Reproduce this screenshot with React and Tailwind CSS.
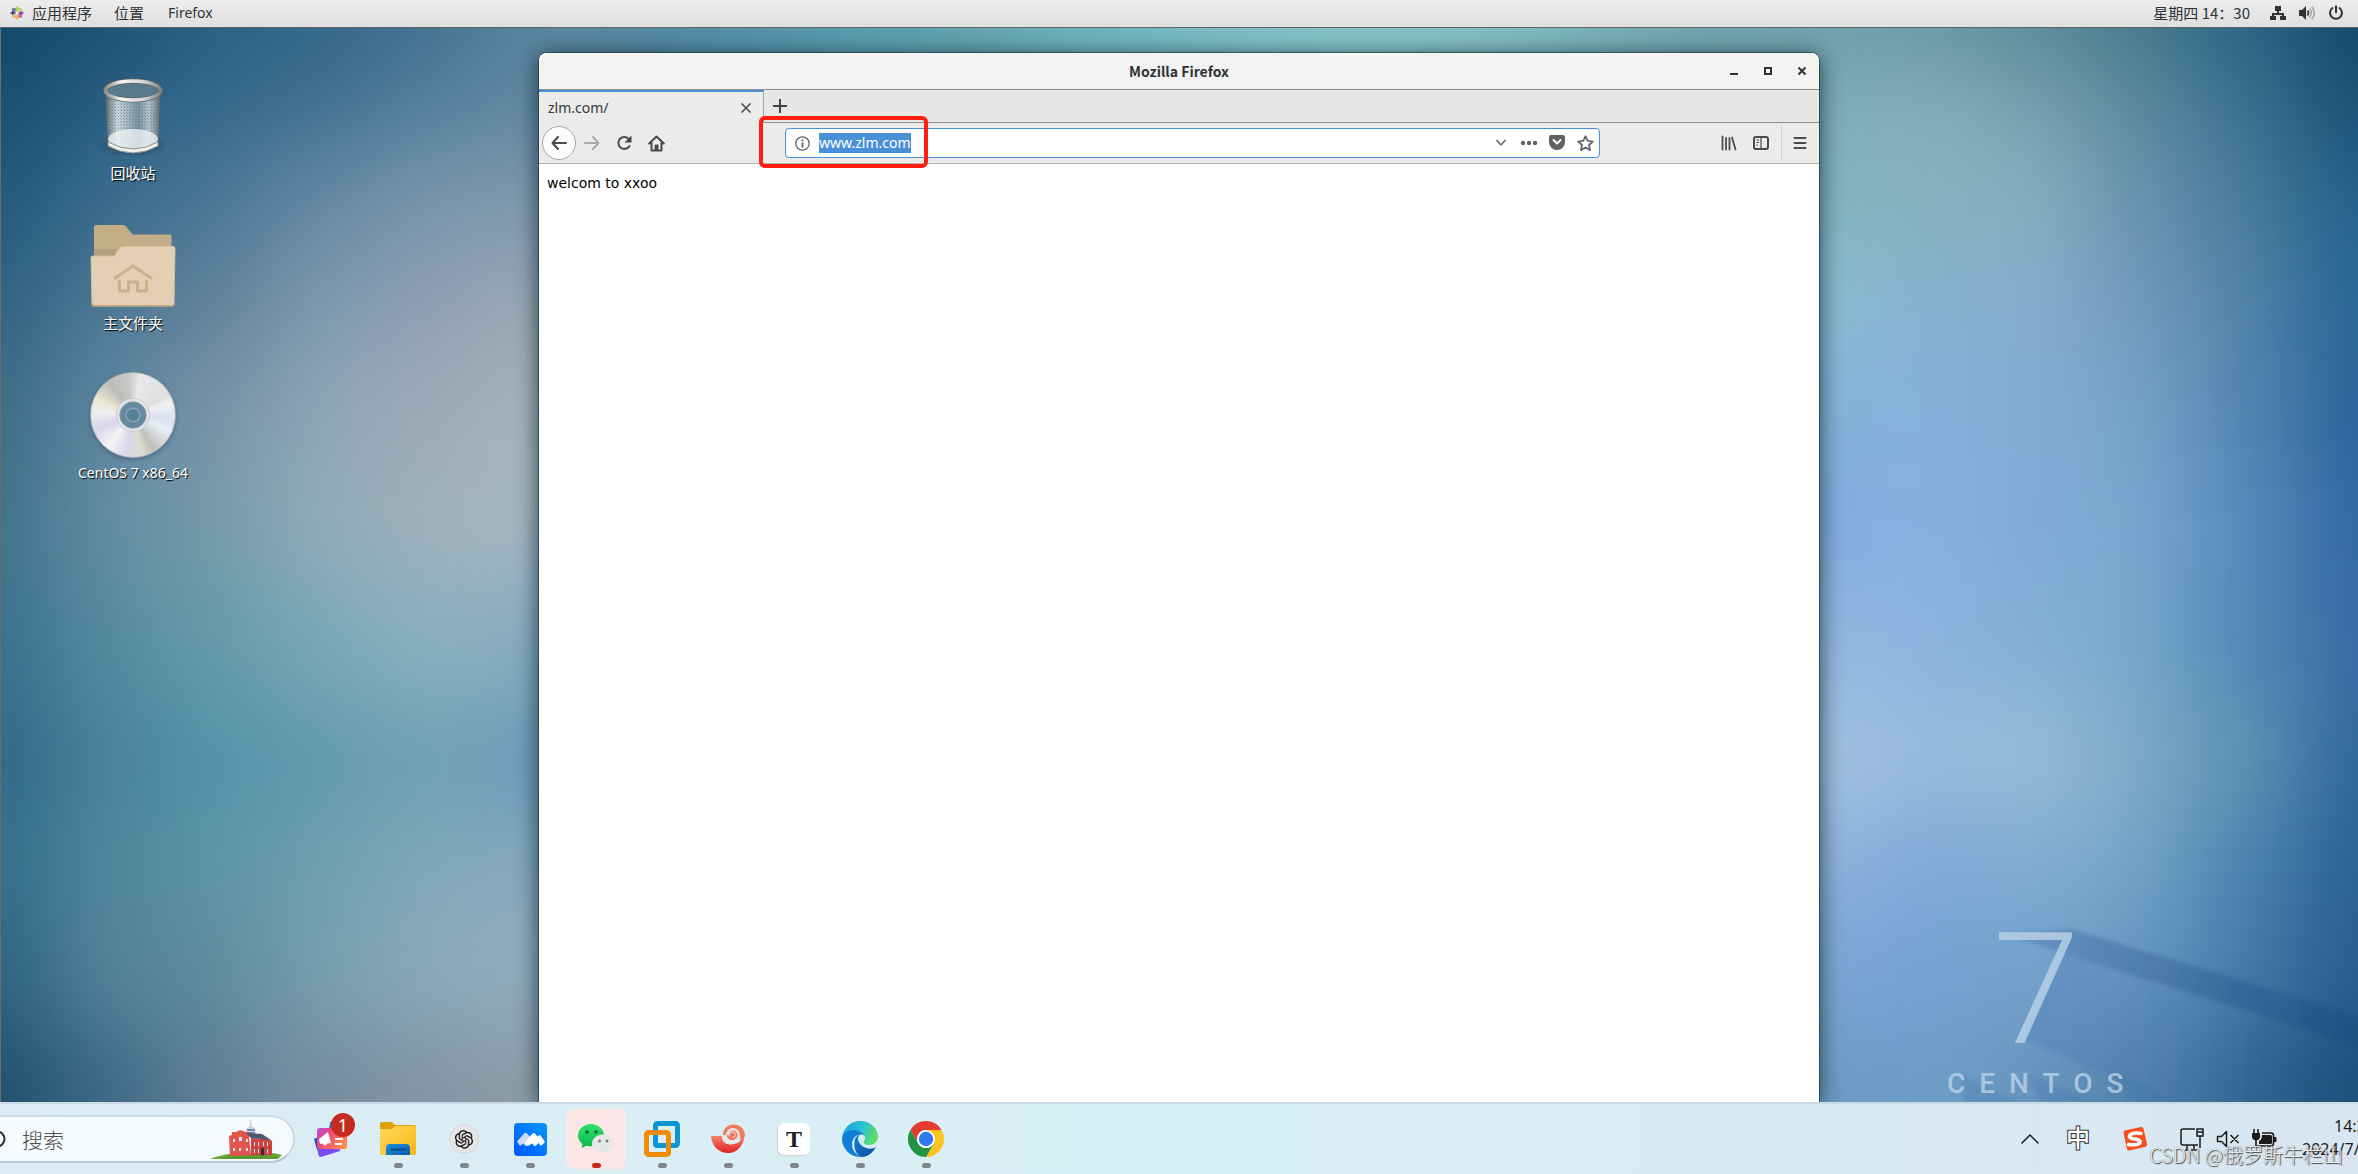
import { AiOutlineOpenAI } from 'react-icons/ai';

// Wallpaper colour samples: the centre columns only show above the window
const LEFT_X = [0, 107, 214, 320, 430, 540];
const RIGHT_X = [1819, 1927, 2034, 2140, 2247, 2358];
const ROW_Y = [28, 100, 200, 300, 400, 520, 650, 760, 860, 960, 1100];

const LEFT_COLORS = [
  '114767 1b5176 2a6082 336789 43718f 5a849e',
  '184e70 2a5e81 366a8c 42708f 557f9c 6489a2',
  '22597b 3b6c8e 4b7695 6688a3 7a97ae 8099ac',
  '316381 4c7895 618199 7d9ab0 8f9eb1 9ba9b4',
  '3d6b85 5e85a0 7893a8 8fa5b3 9daab7 a8b4bc',
  '40728b 658da3 779ba9 90acb7 a0b2bc a5b7c1',
  '38718c 558a9f 659bab 7aa7b7 8ab0be 88abbf',
  '306785 4a8198 5393a8 629aae 70a0b5 6c9abb',
  '33708b 50879b 5d95a8 6fa0b1 81a8ba 88a9bf',
  '2e647f 55839a 608b9e 78a0af 8aa9b8 92adbb',
  '1f4f6c 3e6985 617f97 788d9f 8395a2 8f9da8',
];

const RIGHT_COLORS = [
  '6fa0a9 6a98a2 5a8a98 45798c 2a6382 14476a',
  '80adb6 87adb9 7ca0b0 5c899e 3c7090 1c4f74',
  '84b6c0 88b1bd 87adbf 6a92ae 487a9a 23608a',
  '8dbdd4 87b2cf 87accc 7399bb 5282a8 296695',
  '86b3db 87b2db 83abd2 76a2c8 5283ae 2b629a',
  '84abe3 8ab2df 80aad6 7aa7ce 5688bb 3367a2',
  '97b7e2 8db3de 85b0d6 76a7cb 5388b5 386aa3',
  'a5c5e4 98b9da 9abdd6 7fa9c6 5e93b3 31669c',
  '94b3e0 82a9d8 82acd1 74a4c8 4c82ae 2b6095',
  '7ea6d8 75a1d2 74a3cc 6797c0 4579a8 285b8f',
  '6c99c6 6e9ec7 6894be 5080aa 33638f 1c4d78',
];

const CENTER_X = [650, 760, 870, 980, 1090, 1200, 1310, 1420, 1530, 1640, 1740];
const CENTER_COLORS = '5488a2 5492a9 5b9dae 63a4af 6fb2bd 78bac2 84c2c5 86c2c3 7fb9bd 74abb1 6fa2aa'.split(' ');

function edges(points, i, before, after) {
  const start = i === 0 ? before : (points[i - 1] + points[i]) / 2;
  const end = i === points.length - 1 ? after : (points[i] + points[i + 1]) / 2;
  return [start, end];
}

function SampleGrid({ xs, rows, from, to }) {
  return rows.map((row, r) => {
    const [top, bottom] = edges(ROW_Y, r, -150, 1300);
    return row.split(' ').map((color, c) => {
      const [left, right] = edges(xs, c, from, to);
      return (
        <rect key={`${r}-${c}`} x={left} y={top} width={right - left + 1} height={bottom - top + 1} fill={`#${color}`} />
      );
    });
  });
}

function Wallpaper() {
  return (
    <svg className="absolute inset-0 w-full h-full" viewBox="0 28 2358 1074" preserveAspectRatio="none" aria-hidden="true">
      <defs>
        <filter id="soften" filterUnits="userSpaceOnUse" x="-200" y="-150" width="2760" height="1450" colorInterpolationFilters="sRGB">
          <feGaussianBlur stdDeviation="44" />
        </filter>
      </defs>
      <g filter="url(#soften)">
        {CENTER_X.map((x, i) => (
          <rect key={x} x={x - 60} y="-150" width="130" height="1450" fill={`#${CENTER_COLORS[i]}`} />
        ))}
        <SampleGrid xs={LEFT_X} rows={LEFT_COLORS} from={-200} to={595} />
        <SampleGrid xs={RIGHT_X} rows={RIGHT_COLORS} from={1780} to={2560} />
      </g>
    </svg>
  );
}

function LogoShadow() {
  return (
    <svg className="absolute right-0 bottom-0" width="420" height="180" viewBox="1938 922 420 180" aria-hidden="true">
      <defs>
        <linearGradient id="beam" x1="0" y1="0" x2="1" y2="0">
          <stop offset="0" stopColor="#3a669e" stopOpacity="0.25" />
          <stop offset="0.3" stopColor="#3a669e" stopOpacity="0.45" />
          <stop offset="1" stopColor="#14497c" stopOpacity="0.45" />
        </linearGradient>
        <linearGradient id="beamSoft" x1="0" y1="0" x2="1" y2="0">
          <stop offset="0" stopColor="#4a78b4" stopOpacity="0.4" />
          <stop offset="0.7" stopColor="#4a78b4" stopOpacity="0" />
        </linearGradient>
        <filter id="beamBlur"><feGaussianBlur stdDeviation="2" /></filter>
      </defs>
      <g filter="url(#beamBlur)">
        <path d="M2003 934 L2071 929 L2370 1019 L2370 1050 Z" fill="url(#beam)" />
        <path d="M2062 952 L2370 1048 L2370 1110 L2190 1110 L2024 1040 Z" fill="url(#beamSoft)" />
        <path d="M1962 1076 L2020 1102 L1965 1102 Z M2030 1076 L2095 1102 L2040 1102 Z M2120 1074 L2180 1102 L2130 1102 Z" fill="#3f6fa8" fillOpacity="0.3" />
      </g>
    </svg>
  );
}

function CentosMark() {
  const petals = ['#9ccd2a', '#932279', '#efa724', '#262577'];
  return (
    <svg width="14" height="14" viewBox="0 0 14 14" aria-hidden="true">
      {petals.map((color, i) => (
        <g key={color} transform={`rotate(${i * 90} 7 7)`}>
          <path d="M7 0 L9 2.4 L7 6.5 L5 2.4 Z" fill={color} fillOpacity="0.8" />
          <rect x="8.2" y="2" width="3.6" height="3.6" fill={color} fillOpacity="0.6" />
        </g>
      ))}
      <circle cx="7" cy="7" r="1" fill="#fff" />
    </svg>
  );
}

function TopBar() {
  return (
    <header className="flex items-center h-7 pl-[10px] pr-[14px] pb-[2px] bg-linear-to-b from-[#ededed] to-[#dfdfdf] border-b border-[#5f6568] text-[15px] leading-5 text-[#2e3436]">
      <nav className="flex items-center">
        <CentosMark />
        <button className="ml-2">应用程序</button>
        <button className="ml-[22px]">位置</button>
        <button className="ml-6 text-sm leading-5 font-['Noto_Sans',sans-serif]">Firefox</button>
      </nav>
      <div className="flex items-center ml-auto">
        <button className="mr-5">星期四 14：30</button>
        <button className="flex items-center gap-[13px]" aria-label="系统菜单">
          <svg width="16" height="16" viewBox="0 0 16 16" fill="#2e3436">
            <path d="M5 1h6v5H9v2h5v3h2v4h-6v-4h2V10H4v1h2v4H0v-4h2V8h5V6H5z" />
          </svg>
          <svg width="16" height="16" viewBox="0 0 16 16" fill="none">
            <path d="M0 5h3l4-4v14l-4-4H0z" fill="#2e3436" />
            <path d="M8.5 5.5q2 2.5 0 5" stroke="#2e3436" strokeWidth="1.6" />
            <path d="M10.5 3.5q3.6 4.5 0 9M12.7 1.5q5 6.5 0 13" stroke="#a9abab" strokeWidth="1.6" />
          </svg>
          <svg width="16" height="16" viewBox="0 0 16 16" fill="none" stroke="#2e3436" strokeWidth="2" strokeLinecap="round">
            <path d="M8 1.2v6M4.5 3a6 6 0 1 0 7 0" />
          </svg>
        </button>
      </div>
    </header>
  );
}

function TrashIcon() {
  return (
    <svg width="72" height="88" viewBox="0 0 72 88" aria-hidden="true">
      <defs>
        <linearGradient id="bin" x1="0" y1="0" x2="1" y2="0">
          <stop offset="0" stopColor="#4b565b" />
          <stop offset="0.07" stopColor="#7d8c93" stopOpacity="0.9" />
          <stop offset="0.22" stopColor="#dfe6e8" stopOpacity="0.9" />
          <stop offset="0.36" stopColor="#c4d1d6" stopOpacity="0.85" />
          <stop offset="0.6" stopColor="#8aa0ab" stopOpacity="0.8" />
          <stop offset="0.78" stopColor="#cdd7da" stopOpacity="0.85" />
          <stop offset="0.93" stopColor="#7d8c93" stopOpacity="0.9" />
          <stop offset="1" stopColor="#4b565b" />
        </linearGradient>
        <linearGradient id="rim" x1="0" y1="0" x2="1" y2="0">
          <stop offset="0" stopColor="#8b8f8d" />
          <stop offset="0.3" stopColor="#f6f6f5" />
          <stop offset="0.7" stopColor="#d6d7d5" />
          <stop offset="1" stopColor="#7d8180" />
        </linearGradient>
        <pattern id="mesh" width="3" height="3" patternUnits="userSpaceOnUse">
          <rect width="1" height="1" fill="#52666f" fillOpacity="0.5" />
          <rect x="2" y="2" width="1" height="1" fill="#52666f" fillOpacity="0.4" />
        </pattern>
        <radialGradient id="binFloor">
          <stop offset="0" stopColor="#102a3a" stopOpacity="0.7" />
          <stop offset="1" stopColor="#102a3a" stopOpacity="0" />
        </radialGradient>
      </defs>
      <ellipse cx="36" cy="74" rx="36" ry="12" fill="url(#binFloor)" />
      <path d="M8 20 L11 74 Q36 88 61 74 L64 20 Z" fill="url(#bin)" />
      <path d="M8 20 L11 74 Q36 88 61 74 L64 20 Z" fill="url(#mesh)" />
      <ellipse cx="36" cy="68" rx="25" ry="10" fill="#f4f6f5" fillOpacity="0.75" />
      <path d="M11 71 Q36 85 61 71 V75 Q36 89 11 75 Z" fill="#f0f1ef" stroke="#8d9190" strokeWidth="1" />
      <ellipse cx="36" cy="19" rx="28" ry="9" fill="#587b8e" />
      <ellipse cx="36" cy="19" rx="28" ry="9" fill="url(#mesh)" />
      <ellipse cx="36" cy="19.500" rx="27.500" ry="9.500" fill="none" stroke="#5f6664" strokeWidth="5" />
      <ellipse cx="36" cy="19.500" rx="27.500" ry="9.500" fill="none" stroke="url(#rim)" strokeWidth="3.500" />
    </svg>
  );
}

function HomeFolderIcon() {
  return (
    <svg width="88" height="88" viewBox="0 0 88 88" aria-hidden="true">
      <path d="M5 6q0-2 2-2h27q2 0 3.5 2l6 7.5h37q2 0 2 2V40H5z" fill="#c3ae88" />
      <path d="M5 28h22v8H5z" fill="#a8956f" fillOpacity="0.6" />
      <path d="M2 37q0-2 2-2h21.5l5-7.5q1-2 3-2H84q2 0 2 2L85 83q0 2-2 2H5q-2 0-2-2z" fill="#e3d0b4" stroke="#d5c09e" strokeWidth="1" />
      <path d="M3 83q0 2 2 2h78q2 0 2-2" fill="none" stroke="#b89f79" strokeWidth="1.5" />
      <path d="M26 57 L44 45 L62 57" fill="none" stroke="#c8b08b" strokeWidth="3" strokeLinecap="round" strokeLinejoin="round" />
      <path d="M30.5 60v10h9v-9h9v9h9V60" fill="none" stroke="#c8b08b" strokeWidth="3" strokeLinecap="round" strokeLinejoin="round" />
    </svg>
  );
}

function DiscIcon() {
  return (
    <div className="relative w-[86px] h-[86px] rounded-full border border-[#a9adb0] shadow-[0_2px_4px_rgba(20,50,70,0.35)] bg-[conic-gradient(from_10deg,#e9e9ea,#dfdfe2_14%,#f1f1f0_17%,#dbe0ee_24%,#e9edf6_29%,#bfc0bb_39%,#dcdccf_43%,#d9d9ea_50%,#f3f3f6_58%,#d9d7ec_66%,#f0efee_74%,#e7e6cf_79%,#bdbcb8_87%,#c9c8c6_95%,#e9e9ea)]">
      <svg className="absolute inset-0" width="84" height="84" viewBox="0 0 86 86" aria-hidden="true">
        <circle cx="43" cy="43" r="17" fill="#e4e5e9" stroke="#c7c9cd" strokeWidth="1" />
        <circle cx="43" cy="43" r="13.5" fill="#67899d" stroke="#8199a7" strokeWidth="1" />
        <circle cx="43" cy="43" r="7" fill="#54809a" stroke="#87a3b3" strokeWidth="1.5" />
      </svg>
    </div>
  );
}

function DesktopIcon({ icon, label, latin }) {
  return (
    <button className="flex flex-col items-center gap-1 text-white [text-shadow:1px_1px_1px_#000]">
      <span className="flex items-center justify-center h-[88px]">{icon}</span>
      {latin ? (
        <span className="text-sm leading-5 font-['Noto_Sans',sans-serif] whitespace-nowrap">{label}</span>
      ) : (
        <span className="text-[15px] leading-5 whitespace-nowrap">{label}</span>
      )}
    </button>
  );
}

function ToolButton({ label, children }) {
  return (
    <button aria-label={label} className="flex items-center justify-center w-8 h-8 shrink-0">
      {children}
    </button>
  );
}

function TitleBar() {
  return (
    <div className="grid grid-cols-[1fr_auto_1fr] items-center h-[37px] bg-[#f3f3f3] border-b border-[#8e8e8d] rounded-t-lg shadow-[inset_0_1px_0_#ffffff]">
      <span></span>
      <h1 className="text-sm leading-5 font-bold text-[#2e3436]">Mozilla Firefox</h1>
      <div className="flex justify-end">
        <button aria-label="最小化" className="flex items-center justify-center w-[34px] h-8">
          <svg width="10" height="10" viewBox="0 0 10 10"><path d="M1 7h8v2H1z" fill="#2e3436" /></svg>
        </button>
        <button aria-label="最大化" className="flex items-center justify-center w-[34px] h-8">
          <svg width="10" height="10" viewBox="0 0 10 10"><path d="M2 2h6v6H2z" fill="none" stroke="#2e3436" strokeWidth="2" /></svg>
        </button>
        <button aria-label="关闭" className="flex items-center justify-center w-[34px] h-8">
          <svg width="10" height="10" viewBox="0 0 10 10"><path d="M1.5 1.5l7 7M8.5 1.5l-7 7" stroke="#2e3436" strokeWidth="2" /></svg>
        </button>
      </div>
    </div>
  );
}

function TabStrip() {
  return (
    <div className="flex h-[33px] bg-[#e7e7e5] font-['Noto_Sans',sans-serif]">
      <div className="flex items-center justify-between w-[225px] pl-[9px] pr-[10px] border-r border-r-[#a5a5a4] border-t-2 border-t-[#4a90d9] bg-[#ebebea] text-sm leading-5 text-[#33393b]">
        <button>zlm.com/</button>
        <button aria-label="关闭标签页">
          <svg width="14" height="14" viewBox="0 0 14 14" fill="none" stroke="#4a4f52" strokeWidth="1.6">
            <path d="M2.5 2.5l9 9M11.5 2.5l-9 9" />
          </svg>
        </button>
      </div>
      <div className="flex items-center flex-1 pl-[9px] border-b border-[#8e8e8d]">
        <button aria-label="新标签页">
          <svg width="14" height="14" viewBox="0 0 14 14" fill="none" stroke="#3e4447" strokeWidth="2">
            <path d="M7 0v14M0 7h14" />
          </svg>
        </button>
      </div>
    </div>
  );
}

function AddressBar() {
  return (
    <div className="relative flex items-center flex-1 h-[30px] mx-[113px] border border-[#4a90d9] rounded bg-white">
      <button aria-label="网站信息" className="flex items-center justify-center w-[33px] shrink-0">
        <svg width="15" height="15" viewBox="0 0 15 15" fill="none" stroke="#5f6264">
          <circle cx="7.5" cy="7.5" r="6.7" strokeWidth="1.3" />
          <path d="M7.5 6.5v5M7.5 3.5v1.8" strokeWidth="1.8" />
        </svg>
      </button>
      <input
        aria-label="网址"
        defaultValue="www.zlm.com"
        className="field-sizing-content h-5 bg-[#4a90d9] text-white text-sm leading-5 font-['Noto_Sans',sans-serif] outline-none"
      />
      <div className="flex items-center ml-auto">
        <button aria-label="历史记录" className="flex justify-center w-7">
          <svg width="12" height="8" viewBox="0 0 12 8" fill="none" stroke="#5f6264" strokeWidth="1.5"><path d="M1.5 1l4.5 5 4.500-5" /></svg>
        </button>
        <button aria-label="页面操作" className="flex justify-center w-7">
          <svg width="18" height="6" viewBox="0 0 18 6" fill="#5f6264"><circle cx="3" cy="3" r="2.2" /><circle cx="9" cy="3" r="2.2" /><circle cx="15" cy="3" r="2.2" /></svg>
        </button>
        <button aria-label="保存到 Pocket" className="flex justify-center w-7">
          <svg width="18" height="16" viewBox="0 0 18 16">
            <path d="M3 0h12q2 0 2 2v5a8 8 0 0 1-16 0V2q0-2 2-2z" fill="#5f6264" />
            <path d="M5.5 5l3.5 3.5L12.5 5" fill="none" stroke="#fff" strokeWidth="2" strokeLinecap="round" strokeLinejoin="round" />
          </svg>
        </button>
        <button aria-label="添加书签" className="flex justify-center w-7">
          <svg width="17" height="17" viewBox="0 0 17 17" fill="none" stroke="#5f6264" strokeWidth="1.7" strokeLinejoin="round">
            <path d="M8.5 1.2l2.2 4.7 5.2.6-3.9 3.5 1.1 5.2-4.6-2.6-4.6 2.6L5 10 1.1 6.5l5.2-.6z" />
          </svg>
        </button>
      </div>
      {/* highlight around the address */}
      <div className="absolute -left-[27px] -top-[13px] w-[169px] h-[52px] border-4 border-[#ff1f12] rounded-md pointer-events-none"></div>
    </div>
  );
}

function NavBar() {
  return (
    <div className="flex items-center h-[41px] px-[3px] bg-[#ebebea] border-b border-[#b4b4b3]">
      <button aria-label="后退" className="flex items-center justify-center w-[34px] h-[34px] shrink-0 rounded-full border border-[#a9a9a8] bg-[#fbfbfb]">
        <svg width="16" height="14" viewBox="0 0 16 14" fill="none" stroke="#464c4e" strokeWidth="2" strokeLinecap="round" strokeLinejoin="round">
          <path d="M15 7H1.5M7 1L1.5 7 7 13" />
        </svg>
      </button>
      <ToolButton label="前进">
        <svg width="16" height="14" viewBox="0 0 16 14" fill="none" stroke="#a8abac" strokeWidth="2" strokeLinecap="round" strokeLinejoin="round">
          <path d="M1 7h13.5M9 1l5.5 6L9 13" />
        </svg>
      </ToolButton>
      <ToolButton label="刷新">
        <svg width="16" height="16" viewBox="0 0 16 16" fill="none">
          <path d="M13 4.2A6 6 0 1 0 13.5 11" stroke="#464c4e" strokeWidth="2" strokeLinecap="round" />
          <path d="M15.5 0.5v7h-7z" fill="#464c4e" />
        </svg>
      </ToolButton>
      <ToolButton label="主页">
        <svg width="17" height="17" viewBox="0 0 17 17" fill="none" stroke="#464c4e" strokeWidth="2" strokeLinejoin="round" strokeLinecap="round">
          <path d="M1.2 8.5L8.5 1.5l7.3 7M3.5 8v7.500h10V8" />
          <path d="M7 15v-5h3v5z" fill="#464c4e" strokeWidth="1" />
        </svg>
      </ToolButton>
      <AddressBar />
      <ToolButton label="我的足迹">
        <svg width="16" height="16" viewBox="0 0 16 16" fill="none" stroke="#464c4e" strokeLinecap="round">
          <path d="M1.5 1.5v13M5 3v11.5M8.500 3v11.5M11 2.5l3.5 12" strokeWidth="1.8" />
        </svg>
      </ToolButton>
      <ToolButton label="侧栏">
        <svg width="16" height="16" viewBox="0 0 16 16" fill="none" stroke="#464c4e">
          <rect x="1" y="2" width="14" height="12" rx="2" strokeWidth="2" />
          <path d="M8 2v12M3.5 5h2.5M3.5 7.5h2.5M3.5 10H5" strokeWidth="1.2" />
        </svg>
      </ToolButton>
      <div className="w-px h-[34px] ml-1 mr-[2px] bg-[#cfcfce]"></div>
      <ToolButton label="打开菜单">
        <svg width="14" height="14" viewBox="0 0 14 14" fill="none" stroke="#464c4e" strokeWidth="2" strokeLinecap="round">
          <path d="M1.5 2h11M1.5 7h11M1.5 12h11" />
        </svg>
      </ToolButton>
    </div>
  );
}

function BrowserWindow() {
  return (
    <section className="flex flex-col mt-[25px] rounded-t-lg bg-white shadow-[0_0_0_1px_rgba(30,60,70,0.7),0_3px_22px_rgba(0,20,30,0.75)]">
      <TitleBar />
      <TabStrip />
      <NavBar />
      <main className="flex-1 px-2 pt-[9px] text-sm leading-5 text-black font-['DejaVu_Sans',sans-serif]">welcom to xxoo</main>
    </section>
  );
}

function Desktop() {
  return (
    <div className="relative flex-1 grid grid-cols-[1fr_minmax(0,1280px)_1fr] overflow-hidden">
      <Wallpaper />
      <LogoShadow />
      <div className="relative border-l border-[#6c6c6c]">
        <div className="flex flex-col items-center gap-[38px] w-[264px] pt-[43px]">
          <DesktopIcon icon={<TrashIcon />} label="回收站" />
          <DesktopIcon icon={<HomeFolderIcon />} label="主文件夹" />
          <DesktopIcon icon={<DiscIcon />} label="CentOS 7 x86_64" latin />
        </div>
      </div>
      <div className="relative grid">
        <BrowserWindow />
      </div>
      <div className="relative flex flex-col justify-end items-start pl-32 pb-[2px] overflow-hidden font-['Roboto',sans-serif] text-[#bcd3ea]/80">
        <div className="flex flex-col items-center">
          <span className="mr-3 text-[156px] leading-[156px] font-light">7</span>
          <span className="text-[28px] leading-8 font-medium tracking-[14px]">CENTOS</span>
        </div>
      </div>
    </div>
  );
}

function WidgetsIcon() {
  return (
    <svg width="40" height="40" viewBox="0 0 40 40" aria-hidden="true">
      <defs>
        <linearGradient id="card" x1="0" y1="0" x2="1" y2="0.6">
          <stop offset="0" stopColor="#b04fe0" />
          <stop offset="0.4" stopColor="#f2457f" />
          <stop offset="1" stopColor="#ff8a4a" />
        </linearGradient>
      </defs>
      <path d="M18 4q1-3 4-2l10 3v10H16z" fill="#1d6fe0" />
      <path d="M2 20l4-2 6 14-7-1z" fill="#1556c9" />
      <path d="M5 28l22-3 1 7-19 6q-2 0-2.5-2z" fill="#7a4bf2" />
      <rect x="5" y="9" width="30" height="21" rx="3" fill="url(#card)" />
      <path d="M7 20l9-7 3 11-4 .5q-.5 2.5-2.5 2-1.5-.5-1.5-2l-3 .5z" fill="#fff" />
      <path d="M23 20h8M23 25h7" stroke="#fff" strokeWidth="2" />
    </svg>
  );
}

function ExplorerIcon() {
  return (
    <svg width="36" height="34" viewBox="0 0 36 34" aria-hidden="true">
      <defs>
        <linearGradient id="explorer" x1="0" y1="0" x2="1" y2="1">
          <stop offset="0" stopColor="#ffd75e" />
          <stop offset="1" stopColor="#fbb813" />
        </linearGradient>
        <linearGradient id="explorerTab" x1="0" y1="0" x2="1" y2="1">
          <stop offset="0" stopColor="#1a8fe0" />
          <stop offset="1" stopColor="#0a5ea8" />
        </linearGradient>
      </defs>
      <path d="M0 2q0-2 2-2h9q1 0 2 1l2 2h19q2 0 2 2v6H0z" fill="#dd9f0a" />
      <path d="M0 7h11q1 0 2-1l1.5-2H34q2 0 2 2v25q0 2-2 2H2q-2 0-2-2z" fill="url(#explorer)" />
      <path d="M6 33v-7q0-4 4-4h16q4 0 4 4v7z" fill="url(#explorerTab)" />
      <path d="M11 27.5h14" stroke="#0b4a8a" strokeWidth="1.8" strokeLinecap="round" />
    </svg>
  );
}

function MeetingIcon() {
  return (
    <svg width="33" height="33" viewBox="0 0 33 33" aria-hidden="true">
      <defs>
        <linearGradient id="meeting" x1="0" y1="1" x2="1" y2="0">
          <stop offset="0" stopColor="#0055ff" />
          <stop offset="1" stopColor="#0099ff" />
        </linearGradient>
      </defs>
      <rect width="33" height="33" rx="4" fill="url(#meeting)" />
      <path d="M3.5 18l6.500-7.500q1.500-1.500 3 0l6 6.500-6 5.500q-1 1-2 0l-2-2-1.500 1.500q-1 1-2 0l-2-2.500q-.7-1 0-1.500z" fill="#c9dcff" />
      <path d="M10.500 20l8-9.500q1.200-1.200 2.400 0l2.600 3 1-1q1-1 2 0l4 5.500q.6.8 0 1.500l-2.500 2.500q-1 1-2 0L24.500 20l-2.500 2.500q-1 1-2 0l-2-2-4 2.500z" fill="#fff" />
    </svg>
  );
}

function WeChatIcon() {
  return (
    <svg width="38" height="36" viewBox="0 0 38 36" aria-hidden="true">
      <defs>
        <linearGradient id="wechat" x1="0" y1="0" x2="0" y2="1">
          <stop offset="0" stopColor="#2fe26f" />
          <stop offset="1" stopColor="#0cb54c" />
        </linearGradient>
      </defs>
      <path d="M14 3C7 3 1 8 1 14.5c0 3.5 1.8 6.500 4.5 8.5L4.5 27l5-2.3c1.400.4 3 .6 4.500.6 7 0 13-5 13-11S21 3 14 3z" fill="url(#wechat)" />
      <circle cx="10" cy="11" r="1.8" fill="#08622b" />
      <circle cx="19" cy="11" r="1.8" fill="#08622b" />
      <path d="M26 13.5c-6 0-11 4-11 9.2S20 32 26 32c1.3 0 2.5-.2 3.6-.5L34 33.5l-.8-3.5c2.4-1.7 3.8-4.3 3.8-7.3 0-5.2-5-9.2-11-9.200z" fill="#e5e8e6" />
      <circle cx="22.5" cy="20" r="1.5" fill="#7c807e" />
      <circle cx="30" cy="20" r="1.5" fill="#7c807e" />
    </svg>
  );
}

function VmwareIcon() {
  return (
    <svg width="36" height="36" viewBox="0 0 36 36" fill="none" strokeWidth="5" aria-hidden="true">
      <rect x="11.5" y="2.5" width="22" height="22" rx="2" stroke="#0b95d3" />
      <rect x="2.5" y="11.5" width="22" height="22" rx="2" stroke="#f38b00" />
      <path d="M11.5 16v6.5q0 2 2 2H21" stroke="#0b95d3" />
    </svg>
  );
}

function ShellIcon() {
  return (
    <svg width="36" height="32" viewBox="0 0 36 32" aria-hidden="true">
      <defs>
        <linearGradient id="shell" x1="0" y1="0" x2="0" y2="1">
          <stop offset="0" stopColor="#f58a6b" />
          <stop offset="1" stopColor="#e32222" />
        </linearGradient>
      </defs>
      <path d="M1 13h11q0 8 8 8.500c8 0 13-5 14.500-9.500-.5 10-7 18-16 18S2 24 1 13z" fill="url(#shell)" />
      <path d="M13 12C13 6 17.500 1.500 23.500 1.500 30 1.500 35 6 35 13c0 1-3 4-5 5 1-9-2-13-7-13-4 0-6.500 3-6.500 6.500S19 17 22 17s5.500-2 5.500-5-2-4.500-4.500-4.500-3.500 1.500-3.500 3 1 2.500 2.500 2.500 2-.8 2-1.500" fill="#f3795c" />
      <circle cx="22.500" cy="12" r="6.200" fill="none" stroke="#fbd9cf" strokeWidth="1" />
      <path d="M19.500 13.500q-1-4 3-4.500 3.500.5 3 3.500-.8 2.500-3.500 1.500" fill="none" stroke="#fbd9cf" strokeWidth="1" />
      <path d="M12.500 13c0 6 5 8.500 9.500 7.500" fill="none" stroke="#fbd9cf" strokeWidth="1.200" />
    </svg>
  );
}

function EdgeIcon() {
  return (
    <svg width="36" height="36" viewBox="0 0 36 36" aria-hidden="true">
      <defs>
        <linearGradient id="edgeTop" x1="0" y1="0.3" x2="1" y2="0.6">
          <stop offset="0" stopColor="#1b9de2" />
          <stop offset="0.5" stopColor="#2cc3d6" />
          <stop offset="1" stopColor="#5fe05a" />
        </linearGradient>
        <linearGradient id="edgeLow" x1="0" y1="0" x2="1" y2="1">
          <stop offset="0" stopColor="#1583d8" />
          <stop offset="1" stopColor="#0d4a9c" />
        </linearGradient>
      </defs>
      <path d="M0 17C1 7 9 0 18 0c11 0 18 8 18 15.5 0 5-4 8.5-8.5 8.5-4 0-6-1.5-6-2.800 0-1 1.500-1.700 1.500-4.200 0-3.500-4-7.500-10-7.500C6 9.500 1 13 0 17z" fill="url(#edgeTop)" />
      <path d="M0 18c0-5 5-9 12-9 5 0 9 2.500 10.500 5.500-1.200-.8-2.500-1-3.500-1-5 0-9 4-9 10 0 5.500 4 10.500 9.500 12.400C9 37 0 28 0 18z" fill="#0f7fd6" />
      <path d="M12.500 20c.5-3.500 3-6 5.500-6.500-1.500 2-1.500 3.500-1 5.500 1.200 5 6.500 8 11 7.500 2.500-.3 4.300-1 5.500-1.600.8-.3 1 .2.600.8C31 31.500 26 36 19.500 36 14 34 11.500 27 12.500 20z" fill="url(#edgeLow)" />
      <path d="M18 14.500c-3 4 0 11.500 10 12.500 3 0 5-1 6-1.800" fill="none" stroke="#d9eef5" strokeWidth="1.5" />
    </svg>
  );
}

function ChromeIcon() {
  return (
    <svg width="36" height="36" viewBox="0 0 36 36" aria-hidden="true">
      <path d="M18 9h15.6q2.4 4.5 2.4 9a18 18 0 0 1-18 18l7.8-13.5z" fill="#fcc31e" />
      <path d="M2.4 9A18 18 0 0 1 33.6 9H18a9 9 0 0 0-7.8 13.5z" fill="#e33b2e" />
      <path d="M2.4 9A18 18 0 0 0 18 36l7.8-13.5a9 9 0 0 1-15.600 0z" fill="#229342" />
      <circle cx="18" cy="18" r="9" fill="#fff" />
      <circle cx="18" cy="18" r="7.2" fill="#3079ee" />
    </svg>
  );
}

function TyporaIcon() {
  return (
    <span className="flex items-center justify-center w-8 h-8 rounded-md bg-white shadow-[-1px_1px_1px_#c9d1d6] text-2xl leading-8 text-[#222] font-['Liberation_Serif',serif] font-bold">T</span>
  );
}

function HallIcon() {
  return (
    <svg width="72" height="41" viewBox="0 0 72 41" aria-hidden="true">
      <path d="M0 40Q20 32 40 35q20-3 32 1l-4 4z" fill="#6aa83a" />
      <path d="M36 14l1-5 3-2V2l1-2 .5 2v5l3 2 1 5v4H36z" fill="#c9d2e4" />
      <path d="M37 11h8M36 14h9" stroke="#5d6c92" strokeWidth="1.5" />
      <path d="M19 17l3-1v-3h4l4-2 6 2h3v4l2 20H20z" fill="#e2564c" />
      <path d="M41 19l18 1 3 2v14l-21 1z" fill="#c9443e" />
      <path d="M36 14l16 1 9 6-20-2z" fill="#4d5672" />
      <g fill="#dfe6f3">
        <path d="M23 20h2v3h-2zM29 18h3v4h-3zM36 20h2v3h-2zM23 29h2v3h-2zM29 29h2v3h-2zM36 29h2v3h-2z" />
        <path d="M44 23h1v4h-1zM48 23h1v4h-1zM53 23h1v4h-1zM57 23h1v4h-1zM44 30h1v4h-1zM48 30h1v4h-1zM57 30h1v4h-1z" />
      </g>
      <path d="M51 29h3v8h-3z" fill="#3f2b33" />
      <path d="M14 38q20-3 54-1l-2 3H10z" fill="#5a9a30" />
    </svg>
  );
}

const apps = [
  { name: '小组件', icon: <WidgetsIcon />, badge: '1' },
  { name: '文件资源管理器', icon: <ExplorerIcon />, running: true },
  {
    name: 'ChatGPT',
    icon: (
      <span className="flex items-center justify-center w-[30px] h-[30px] rounded-full bg-[#e6e6e6] border border-[#d0d6da]">
        <AiOutlineOpenAI size={24} color="#222" />
      </span>
    ),
    running: true,
  },
  { name: '腾讯会议', icon: <MeetingIcon />, running: true },
  { name: '微信', icon: <WeChatIcon />, running: true, active: true },
  { name: 'VMware', icon: <VmwareIcon />, running: true },
  { name: 'Xshell', icon: <ShellIcon />, running: true },
  { name: 'Typora', icon: <TyporaIcon />, running: true },
  { name: 'Edge', icon: <EdgeIcon />, running: true },
  { name: 'Chrome', icon: <ChromeIcon />, running: true },
];

function AppButton({ app }) {
  return (
    <button
      aria-label={app.name}
      className={`relative flex items-center justify-center w-[60px] h-[60px] rounded-lg ${app.active ? 'bg-[#fde6e7]' : ''}`}
    >
      {app.icon}
      {app.badge && (
        <span className="absolute right-[7px] top-1 flex items-center justify-center w-6 h-6 rounded-full bg-[#c42b1c] text-lg leading-6 text-white font-['Noto_Sans',sans-serif]">
          {app.badge}
        </span>
      )}
      {app.running && (
        <span className={`absolute bottom-px w-[9px] h-[5px] rounded-full ${app.active ? 'bg-[#c42b1c]' : 'bg-[#7f878c]'}`}></span>
      )}
    </button>
  );
}

function Tray() {
  return (
    <div className="flex items-center h-[60px] ml-auto">
      <button aria-label="显示隐藏的图标" className="flex justify-center w-12">
        <svg width="20" height="12" viewBox="0 0 20 12" fill="none" stroke="#1b1b1b" strokeWidth="1.5"><path d="M1.5 10.5L10 2l8.5 8.5" /></svg>
      </button>
      <button className="w-12 pb-1 text-2xl leading-8 font-medium text-white [-webkit-text-stroke:2px_#2b2b2b] [paint-order:stroke_fill]">中</button>
      <button aria-label="搜狗输入法" className="flex justify-center w-12 ml-[9px]">
        <svg width="26" height="26" viewBox="0 0 26 26">
          <path d="M3 4.5L19 1q2-.3 2.5 1.5L25 18q.3 2-1.5 2.8L7.5 24.5q-2 .3-2.500-1.500L1.500 7Q1.200 5 3 4.500z" fill="#f6511d" />
          <path d="M19 7.500q-8-1.500-11 1.500-1.500 3 3 3.800 8 .7 7 3.700-2 3.200-11.500 2" fill="none" stroke="#fff" strokeWidth="3.6" strokeLinecap="round" />
        </svg>
      </button>
      <button aria-label="网络、音量和电池" className="flex items-center ml-[15px]">
        <span className="flex justify-center w-9">
          <svg width="26" height="26" viewBox="0 0 26 26" fill="none" stroke="#1b1b1b" strokeWidth="1.5">
            <path d="M16 3H4q-2 0-2 2v12q0 2 2 2h15M8 19v4M15 19v4M6 24h12" />
            <path d="M18 3h6v7h-6zM21 10v12M18 6h6" />
          </svg>
        </span>
        <span className="flex justify-center w-9">
          <svg width="24" height="20" viewBox="0 0 24 20" fill="none" stroke="#1b1b1b" strokeWidth="1.5" strokeLinejoin="round">
            <path d="M1.5 7.5v5h4l5 5v-15l-5 5zM14.5 6l8 8M22.5 6l-8 8" />
          </svg>
        </span>
        <span className="flex justify-center w-9">
          <svg width="26" height="22" viewBox="0 0 26 22" fill="none">
            <path d="M3 1v4M7 1v4" stroke="#1b1b1b" strokeWidth="1.6" />
            <path d="M1 5h8v4q0 2-2 3H3q-2-1-2-3z" fill="#1b1b1b" />
            <path d="M5 12v8M11 5h9q2.500 0 2.500 2.500v8q0 2.500-2.500 2.500H6" stroke="#1b1b1b" strokeWidth="1.6" />
            <path d="M11 7h8.500q1.500 0 1.500 1.500v6q0 1.500-1.500 1.500H8v-3q3-1 3-6zM23 9h1.500q1 0 1 1v3q0 1-1 1H23z" fill="#1b1b1b" />
          </svg>
        </span>
      </button>
      <div className="w-14 ml-5 pb-[2px] overflow-hidden whitespace-nowrap text-base leading-[23px] text-[#1b1b1b] font-['Noto_Sans',sans-serif]">
        <p className="pl-8">14:30</p>
        <p>2024/7/</p>
      </div>
    </div>
  );
}

function Taskbar() {
  return (
    <footer className="relative flex items-center h-[72px] border-t-2 border-[#cbdbe6] bg-linear-to-r from-[#dcebf4] via-[#d8f0f5] to-[#d9e6f2] overflow-hidden">
      <label className="flex items-center w-[295px] h-[48px] pr-[11px] rounded-r-full border-y-2 border-r-2 border-t-[#cbdce8] border-r-[#c8d9e5] border-b-[#b5c6d1] bg-[#f5fafd]">
        <svg width="6" height="20" viewBox="0 0 6 20" fill="none" aria-hidden="true">
          <circle cx="-3" cy="10" r="7.5" stroke="#2b2b2b" strokeWidth="2" />
        </svg>
        <input
          aria-label="搜索"
          placeholder="搜索"
          className="flex-1 min-w-0 pl-4 bg-transparent text-[21px] leading-8 font-light placeholder:text-[#4d4d4d] outline-none"
        />
        <HallIcon />
      </label>
      <div className="flex gap-[6px] ml-[7px]">
        {apps.map((app) => (
          <AppButton key={app.name} app={app} />
        ))}
      </div>
      <Tray />
      <p className="absolute right-[15px] bottom-[5px] text-xl leading-7 font-light text-[#e9eef2] [text-shadow:1px_1px_1px_#444,0_0_1px_#777]">
        CSDN @俄罗斯牛栏山
      </p>
    </footer>
  );
}

export default function App() {
  return (
    <div className="flex flex-col min-h-screen font-['Noto_Sans_CJK_SC',sans-serif]">
      <TopBar />
      <Desktop />
      <Taskbar />
    </div>
  );
}
